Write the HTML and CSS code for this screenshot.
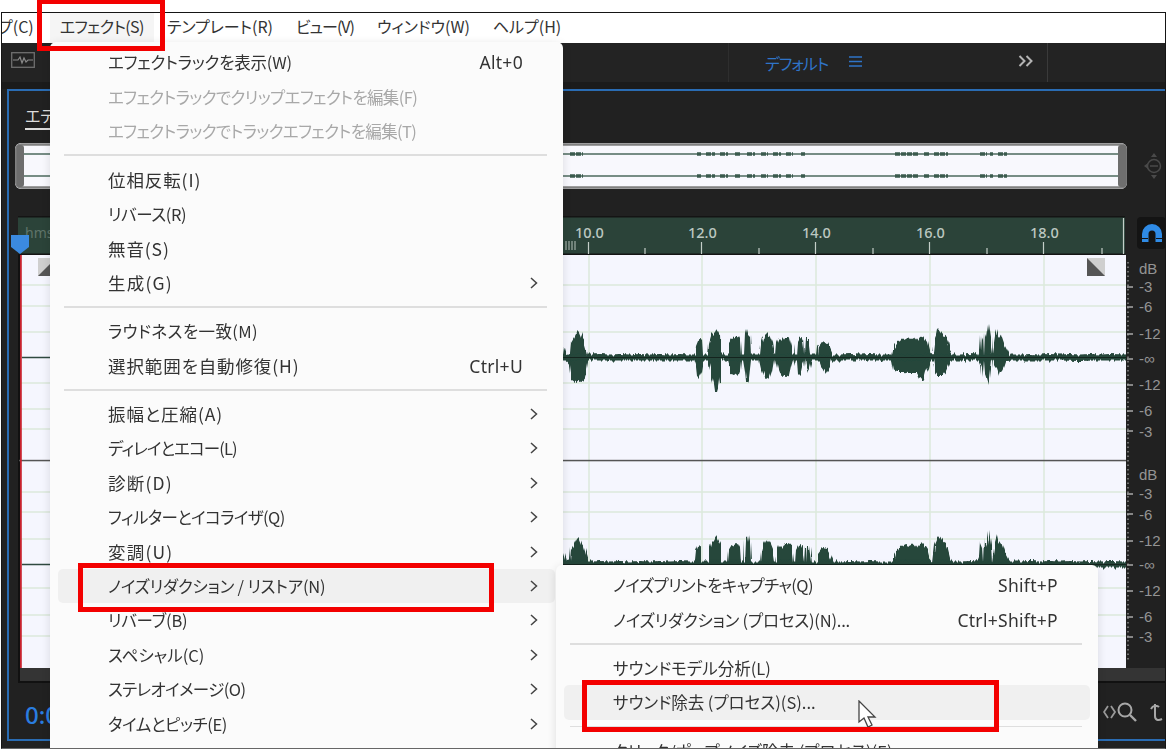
FILE: index.html
```html
<!DOCTYPE html>
<html lang="ja">
<head>
    <meta charset="UTF-8">
    <title>エフェクトメニュー</title>
    <link rel="stylesheet" href="styles.css">
</head>
<body>

<div class="app">
    <div class="menubar">
        <span class="menubar-item first">プ(C)</span>
        <span class="menubar-item active">エフェクト(S)</span>
        <span class="menubar-item">テンプレート(R)</span>
        <span class="menubar-item view">ビュー(V)</span>
        <span class="menubar-item">ウィンドウ(W)</span>
        <span class="menubar-item">ヘルプ(H)</span>
    </div>

    <div class="toolbar">
        <div class="toolbar-left">
            <svg class="wave-icon" viewBox="0 0 24 16"><rect x="0.7" y="0.7" width="22.6" height="14.6" fill="none" stroke="#6f6f6f" stroke-width="1.3"/><path d="M2 8h5l2-3 2 6 2-5 2 4 2-2h5" fill="none" stroke="#8a8a8a" stroke-width="1.2"/></svg>
        </div>
        <div class="toolbar-mid">
            <span class="workspace">デフォルト</span>
            <svg class="hamburger" viewBox="0 0 13 11"><path d="M0 1h13M0 5.500h13M0 10h13" stroke="#2f74c8" stroke-width="1.5"/></svg>
            <svg class="more" viewBox="0 0 16 12"><path d="M1.500 1l5 5-5 5M8.500 1l5 5-5 5" fill="none" stroke="#b4b4b4" stroke-width="2"/></svg>
        </div>
    </div>

    <div class="panel">
        <div class="tabs"><span class="tab">エディター</span></div>

        <div class="overview-row">
            <div class="overview">
                <svg viewBox="15 143 1113 46" width="1113" height="46">
                    <rect x="15" y="143" width="1113" height="46" fill="#f8f8fd"/>
                    <path d="M24 154h1094M24 176h1094" stroke="#4c6a5d" stroke-width="1.300"/>
                    <path class="blobs" d="M570 154h13M697 154h4M706 154h9M720 154h8M735 154h5M747 154h8M761 154h7M773 154h8M786 154h7M801 154h4M895 154h24M924 154h6M934 154h14M980 154h7M990 154h3M998 154h9"/>
                    <path class="blobs" d="M570 176h13M697 176h4M706 176h9M720 176h8M735 176h5M747 176h8M761 176h7M773 176h8M786 176h7M801 176h4M895 176h24M924 176h6M934 176h14M980 176h7M990 176h3M998 176h9"/>
                    <rect x="16" y="144.500" width="1111" height="43" rx="5" fill="none" stroke="#808080" stroke-width="2.500"/>
                    <rect x="16.500" y="145" width="7.500" height="42" rx="3" fill="#6e6e6e"/>
                    <rect x="1118" y="145" width="8.500" height="42" rx="3" fill="#6e6e6e"/>
                </svg>
            </div>
            <svg class="zoom-knob" viewBox="0 0 22 28"><path d="M11 1l3 4H8zM11 27l3-4H8zM1 14l4-3v6z" fill="#4a4a4a"/><circle cx="11" cy="14" r="6.500" fill="none" stroke="#4a4a4a" stroke-width="1.500"/><path d="M7 14h8" stroke="#4a4a4a" stroke-width="1.500"/></svg>
        </div>

        <div class="editor">
            <div class="editor-main">
                <svg class="ruler" viewBox="18 216 1107 39" width="1107" height="39">
                    <rect x="18" y="216" width="1107" height="39" fill="#2b4339"/>
                    <rect x="18" y="216" width="1107" height="1.500" fill="#141414"/>
                    <rect x="18" y="253.500" width="1107" height="1.500" fill="#141414"/>
                    <text class="ruler-faint" x="25" y="238">hms</text>
                    <path d="M566 241v9M569 241v9M572 241v9M575 241v9" stroke="#b8c4bd" stroke-width="1"/>
                    <path d="M588.500 242v12M701.500 242v12M815.500 242v12M929.500 242v12M1043.500 242v12M1123.500 218v36" stroke="#c4cec8" stroke-width="1.200"/>
                    <path d="M645 248v6M759 248v6M873 248v6M987 248v6M1102 248v6" stroke="#c4cec8" stroke-width="1.200"/>
                    <text class="ruler-label" x="575" y="238">10.0</text>
                    <text class="ruler-label" x="688" y="238">12.0</text>
                    <text class="ruler-label" x="802" y="238">14.0</text>
                    <text class="ruler-label" x="916" y="238">16.0</text>
                    <text class="ruler-label" x="1030" y="238">18.0</text>
                </svg>
                <svg class="track" viewBox="18 255 1108 413" width="1108" height="413">
                    <defs>
                        <filter id="rough" filterUnits="userSpaceOnUse" x="18" y="255" width="1108" height="413">
                            <feTurbulence type="fractalNoise" baseFrequency="0.55 0.01" numOctaves="2" seed="4"/>
                            <feDisplacementMap in="SourceGraphic" scale="6" xChannelSelector="A" yChannelSelector="G"/>
                        </filter>
                        <path id="wave" d="M563 355L564 347 566 354 570 353 571 342 574 337 576 333 578 331 580 333 582 338 584 341 586 348 588 355 592 355 600 354 610 355 620 354 630 355 640 354 650 355 660 354 670 355 680 354 690 355 695 355 696 345 698 340 701 339 702 355 708 355 709 343 711 336 714 333 716 329 718 332 720 336 721 355 728 355 729 344 732 339 736 337 738 336 740 340 741 355 744 355 745 333 746 329 748 328 749 334 751 336 752 355 760 355 761 345 763 338 765 334 767 332 770 337 772 342 774 355 776 355 777 343 779 338 782 341 785 337 788 337 790 338 792 346 793 355 796 355 797 342 799 338 801 337 803 341 805 355 806 339 809 339 811 355 817 355 818 346 821 342 824 341 827 342 830 348 833 355 840 355 850 354 860 355 870 354 880 355 892 355 894 347 897 342 902 340 906 338 910 339 914 337 917 341 920 337 923 336 925 339 927 342 929 350 933 355 935 338 937 333 938 328 940 331 942 334 946 337 948 342 950 350 953 355 960 355 970 354 978 355 980 350 981 335 983 340 984 355 985 332 987 338 989 324 991 338 992 355 995 335 997 328 999 337 1001 334 1004 343 1007 349 1010 355 1020 355 1030 354 1040 355 1050 354 1060 355 1070 354 1080 355 1090 354 1100 355 1110 354 1126 355L1126 360 1110 360 1095 360 1080 361 1060 360 1040 360 1020 360 1012 360 1006 361 1004 367 1002 371 999 374 997 368 995 366 992 360 990 378 989 385 987 378 985 372 984 360 982 376 981 365 979 360 960 360 952 360 949 364 946 371 942 376 938 376 935 372 933 360 930 360 928 368 926 372 924 380 921 378 919 379 916 373 912 373 908 373 904 372 898 372 894 370 892 360 880 360 860 360 840 360 831 360 829 368 826 373 824 370 821 366 819 360 812 360 810 368 808 372 806 367 805 360 802 367 800 376 797 373 796 360 794 360 792 367 790 376 787 377 784 376 780 374 778 369 776 360 774 360 772 372 770 378 767 379 764 377 761 369 759 360 752 360 750 378 748 382 746 382 745 372 743 360 741 360 740 369 738 374 735 375 731 374 729 367 727 360 722 360 720 378 719 385 717 392 715 392 714 385 712 378 710 368 708 360 703 360 701 373 699 377 697 375 696 366 694 360 680 360 660 360 640 360 620 360 600 360 590 360 588 362 586 374 584 380 581 382 578 381 575 382 572 380 570 365 566 360 563 360Z"/>
                    </defs>
                    <rect x="18" y="255" width="2" height="413" fill="#111"/>
                    <rect x="20" y="255" width="1106" height="413" fill="#f5f6fe"/>
                    <path d="M20 285h1106M20 306h1106M20 332h1106M20 383h1106M20 409h1106M20 429h1106M20 492h1106M20 512h1106M20 539h1106M20 588h1106M20 615h1106M20 636h1106" stroke="#dce9dc" stroke-width="1.500"/>
                    <path d="M589 255v413M702 255v413M816 255v413M930 255v413M1044 255v413M475 255v413M361 255v413M247 255v413M133 255v413" stroke="#dce9dc" stroke-width="1.500"/>
                    <rect x="19" y="459.800" width="1107" height="1.500" fill="#555"/>
                    <g filter="url(#rough)">
                        <use href="#wave" fill="#25463b"/>
                        <use href="#wave" transform="translate(0 207)" fill="#25463b"/>
                        <path d="M563 357.500h563M563 564.500h563" stroke="#25463b" stroke-width="6"/>
                    </g>
                    <path d="M22 357.500h540M22 564.500h540" stroke="#2f4a40" stroke-width="1.500"/>
                    <path d="M563 357.500h563M563 564.500h563" stroke="#14241e" stroke-width="1"/>
                    <rect x="38" y="258" width="18" height="18" fill="#cfcfcf"/>
                    <path d="M38 276l18-18v18z" fill="#555"/>
                    <rect x="1087" y="258" width="18" height="18" fill="#cfcfcf"/>
                    <path d="M1087 258l18 18h-18z" fill="#555"/>
                    <rect x="20" y="255" width="1.800" height="413" fill="#c8222e"/>
                </svg>
                <div class="track-end"></div>
                <svg class="playhead" viewBox="0 0 18 19"><path d="M0 0h18v12l-9 7-9-7z" fill="#3b8ae0"/></svg>
            </div>
            <div class="editor-side">
                <div class="magnet">
                    <svg viewBox="0 0 20 18" width="20" height="18"><path d="M0 18V10a10 10 0 0 1 20 0v8h-6.500v-8a3.500 3.500 0 0 0-7 0v8z" fill="#2f8be6"/><path d="M0 14.500h6M14 14.500h6" stroke="#141414" stroke-width="1"/></svg>
                </div>
                <svg class="scale" viewBox="1126 255 40 413" width="40" height="413">
                    <path d="M1128 262v400" stroke="#8a8a8a" stroke-width="1.500" stroke-dasharray="1.500 3"/>
                    <path d="M1127 287h6M1127 307h6M1127 334h6M1127 359h6M1127 385h6M1127 411h6M1127 431h6M1127 494h6M1127 514h6M1127 541h6M1127 565h6M1127 591h6M1127 617h6M1127 637h6" stroke="#a8a8a8" stroke-width="1.500"/>
                    <text x="1139" y="274">dB</text>
                    <text x="1139" y="292">-3</text>
                    <text x="1139" y="312">-6</text>
                    <text x="1139" y="339">-12</text>
                    <text x="1139" y="364">-∞</text>
                    <text x="1139" y="390">-12</text>
                    <text x="1139" y="416">-6</text>
                    <text x="1139" y="437">-3</text>
                    <text x="1139" y="480">dB</text>
                    <text x="1139" y="499">-3</text>
                    <text x="1139" y="520">-6</text>
                    <text x="1139" y="546">-12</text>
                    <text x="1139" y="570">-∞</text>
                    <text x="1139" y="596">-12</text>
                    <text x="1139" y="622">-6</text>
                    <text x="1139" y="642">-3</text>
                </svg>
                <div class="track-end"></div>
            </div>
        </div>

        <div class="transport">
            <span class="timecode">0:0</span>
            <svg class="zoom-tools" viewBox="0 0 62 24"><path d="M5 6l-4 6 4 6M8 6l4 6-4 6" fill="none" stroke="#9a9a9a" stroke-width="1.800"/><circle cx="22" cy="10" r="6.500" fill="none" stroke="#a8a8a8" stroke-width="2"/><path d="M27 15l6 6" stroke="#a8a8a8" stroke-width="2.400"/><path d="M52 4v12c0 4 3 5 7 3M48 9c2-4 6-4 8-2" fill="none" stroke="#a8a8a8" stroke-width="2"/></svg>
        </div>
    </div>

    <!-- メニュー -->
    <div class="menu main-menu">
        <div class="item ls-2"><span>エフェクトラックを表示(W)</span><span class="key">Alt+0</span></div>
        <div class="item off ls-6"><span>エフェクトラックでクリップエフェクトを編集(F)</span></div>
        <div class="item off ls-6"><span>エフェクトラックでトラックエフェクトを編集(T)</span></div>
        <div class="sep"></div>
        <div class="item big"><span>位相反転(I)</span></div>
        <div class="item ls-4"><span>リバース(R)</span></div>
        <div class="item big"><span>無音(S)</span></div>
        <div class="item bigger"><span>生成(G)</span><svg class="arrow" viewBox="0 0 8 12"><path d="M1 1l5.500 5-5.500 5" /></svg></div>
        <div class="sep"></div>
        <div class="item ls-up"><span>ラウドネスを一致(M)</span></div>
        <div class="item big"><span>選択範囲を自動修復(H)</span><span class="key">Ctrl+U</span></div>
        <div class="sep"></div>
        <div class="item big"><span>振幅と圧縮(A)</span><svg class="arrow" viewBox="0 0 8 12"><path d="M1 1l5.500 5-5.500 5" /></svg></div>
        <div class="item ls-9"><span>ディレイとエコー(L)</span><svg class="arrow" viewBox="0 0 8 12"><path d="M1 1l5.500 5-5.500 5" /></svg></div>
        <div class="item bigger"><span>診断(D)</span><svg class="arrow" viewBox="0 0 8 12"><path d="M1 1l5.500 5-5.500 5" /></svg></div>
        <div class="item ls-6"><span>フィルターとイコライザ(Q)</span><svg class="arrow" viewBox="0 0 8 12"><path d="M1 1l5.500 5-5.500 5" /></svg></div>
        <div class="item bigger"><span>変調(U)</span><svg class="arrow" viewBox="0 0 8 12"><path d="M1 1l5.500 5-5.500 5" /></svg></div>
        <div class="item hover ls-2"><span>ノイズリダクション / リストア(N)</span><svg class="arrow" viewBox="0 0 8 12"><path d="M1 1l5.500 5-5.500 5" /></svg></div>
        <div class="item ls-2"><span>リバーブ(B)</span><svg class="arrow" viewBox="0 0 8 12"><path d="M1 1l5.500 5-5.500 5" /></svg></div>
        <div class="item"><span>スペシャル(C)</span><svg class="arrow" viewBox="0 0 8 12"><path d="M1 1l5.500 5-5.500 5" /></svg></div>
        <div class="item ls-6"><span>ステレオイメージ(O)</span><svg class="arrow" viewBox="0 0 8 12"><path d="M1 1l5.500 5-5.500 5" /></svg></div>
        <div class="item ls-4"><span>タイムとピッチ(E)</span><svg class="arrow" viewBox="0 0 8 12"><path d="M1 1l5.500 5-5.500 5" /></svg></div>
    </div>

    <div class="menu sub-menu">
        <div class="item ls-6"><span>ノイズプリントをキャプチャ(Q)</span><span class="key">Shift+P</span></div>
        <div class="item ls-2"><span>ノイズリダクション (プロセス)(N)...</span><span class="key">Ctrl+Shift+P</span></div>
        <div class="sep"></div>
        <div class="item"><span>サウンドモデル分析(L)</span></div>
        <div class="item hover"><span>サウンド除去 (プロセス)(S)...</span></div>
        <div class="sep"></div>
        <div class="item"><span>クリック/ポップノイズ除去 (プロセス)(E)</span></div>
    </div>

    <svg class="cursor" viewBox="0 0 20 28"><path d="M1 1v21l5-4 4 9 4-2-4-8h7z" fill="#fff" stroke="#444" stroke-width="1.300"/></svg>
</div>

<!-- 赤枠 -->
<div class="mark mark-menubar"></div>
<div class="mark mark-noise"></div>
<div class="mark mark-remove"></div>

</body>
</html>
```

FILE: styles.css
```css
html, body {
    margin: 0;
    height: 751px;
    overflow: hidden;
    background-color: #fff;
}
body {
    position: relative;
    font-family: "Noto Sans CJK JP", "Noto Sans", sans-serif;
    color: #333;
}
svg {
    display: block;
}
.app {
    position: absolute;
    left: 1px;
    top: 12px;
    width: 1165px;
    height: 737px;
    box-sizing: border-box;
    border: 1px solid #151515;
    border-bottom-color: #666;
    background-color: #222;
    overflow: hidden;
    filter: blur(0.35px);
}

/* メニューバー */
.menubar {
    display: flex;
    gap: 23px;
    height: 30px;
    box-sizing: border-box;
    padding-bottom: 4px;
    align-items: center;
    background-color: #fff;
    font-size: 16px;
    font-feature-settings: "palt";
    white-space: nowrap;
}
.menubar-item.first {
    margin-left: -4px;
}
.menubar-item.active {
    background-color: #f5f5f5;
    margin: 0 -10px 0 -7px;
    padding: 0 10px;
    line-height: 26px;
    letter-spacing: -0.6px;
    align-self: flex-start;
    height: 30px;
    box-sizing: border-box;
}
.menubar-item.view {
    letter-spacing: -1px;
}

/* ツールバー */
.toolbar {
    display: flex;
    height: 39px;
    border-bottom: 7px solid #1b1b1b;
    background-color: #232323;
}
.toolbar-left {
    width: 726px;
    padding: 9px 0 0 9px;
    box-sizing: border-box;
}
.wave-icon {
    width: 24px;
    height: 16px;
}
.toolbar-mid {
    position: relative;
    display: flex;
    align-items: center;
    width: 320px;
    border-left: 1px solid #2e2e2e;
    border-right: 1px solid #3a3a3a;
    padding-left: 36px;
    box-sizing: border-box;
}
.workspace {
    width: 84px;
    color: #2f74c8;
    font-size: 16px;
    letter-spacing: -1px;
    font-feature-settings: "palt";
}
.hamburger {
    width: 13px;
    height: 11px;
    margin-bottom: 3px;
}
.more {
    width: 16px;
    height: 12px;
    margin: 0 0 3px 156px;
}

/* パネル */
.panel {
    margin-left: 5px;
    height: 652px;
    box-sizing: border-box;
    border: 2px solid #2a6cb3;
    border-right: none;
    background-color: #212121;
}
.tabs {
    height: 38px;
    padding: 12px 0 0 16px;
    box-sizing: border-box;
}
.tab {
    display: inline-block;
    height: 24px;
    border-bottom: 2px solid #ddd;
    color: #ddd;
    font-size: 16px;
    line-height: 22px;
    font-feature-settings: "palt";
}
.overview-row {
    display: flex;
    align-items: center;
    margin: 14px 0 0 6px;
}
.overview {
    width: 1113px;
    height: 46px;
    border-radius: 6px;
    overflow: hidden;
}
.blobs {
    stroke: #3a5a4d;
    stroke-width: 3.500;
    stroke-dasharray: 5 1;
}
.zoom-knob {
    width: 22px;
    height: 28px;
    margin-left: 16px;
}
.editor {
    display: flex;
    margin-top: 27px;
}
.editor-main {
    position: relative;
    width: 1108px;
    margin-left: 9px;
}
.ruler-label {
    font-family: "Noto Sans", sans-serif;
    font-size: 14.500px;
    font-weight: 500;
    fill: #bcc8c1;
}
.ruler-faint {
    font-family: "Noto Sans", sans-serif;
    font-size: 14px;
    fill: #5f7469;
}
.track-end {
    height: 13px;
    background-color: #343434;
    border-left: 2px solid #111;
    border-bottom: 2px solid #111;
}
.editor-side .track-end {
    border-left: none;
}
.playhead {
    position: absolute;
    left: -7px;
    top: 19px;
    width: 18px;
    height: 19px;
}
.editor-side {
    width: 40px;
}
.magnet {
    display: flex;
    align-items: center;
    justify-content: center;
    width: 29px;
    height: 32px;
    margin: 1px 0 6px 11px;
    border-radius: 4px;
    background-color: #141414;
}
.scale text {
    font-family: "Liberation Sans", sans-serif;
    font-size: 15px;
    fill: #949494;
}
.transport {
    display: flex;
    justify-content: space-between;
    align-items: center;
    height: 42px;
    padding: 16px 0 0 16px;
    box-sizing: border-box;
}
.timecode {
    margin-top: 4px;
    color: #2a7de0;
    font-family: "Noto Sans", sans-serif;
    font-size: 24px;
    font-weight: 500;
}
.zoom-tools {
    width: 62px;
    height: 24px;
}

/* メニュー */
.menu {
    position: absolute;
    box-sizing: border-box;
    background-color: #fbfbfb;
    border-radius: 6px;
    box-shadow: 0 2px 10px rgba(0, 0, 0, 0.12);
    font-size: 16.500px;
    font-feature-settings: "palt";
    white-space: nowrap;
}
.main-menu {
    left: 48px;
    top: 29px;
    width: 513px;
    height: 760px;
    padding: 3px 8px;
}
.sub-menu {
    left: 554px;
    top: 552px;
    width: 542px;
    height: 240px;
    padding: 3px 8px;
}
.item {
    display: flex;
    align-items: center;
    justify-content: space-between;
    height: 34.400px;
    padding: 0 17px 0 50px;
    border-radius: 5px;
}
.sub-menu .item {
    padding-left: 49px;
}
.item.off {
    color: #a8a8a8;
}
.item.hover {
    background-color: #f0f0f0;
}
/* かな/漢字で字幅が違うので行ごとに調整 */
.big {
    font-size: 17.500px;
    letter-spacing: 0.9px;
}
.bigger {
    font-size: 17.500px;
    letter-spacing: 1.200px;
}
.ls-up {
    letter-spacing: 0.4px;
}
.ls-2 {
    letter-spacing: -0.2px;
}
.ls-4 {
    letter-spacing: -0.4px;
}
.ls-6 {
    letter-spacing: -0.6px;
}
.ls-9 {
    letter-spacing: -0.9px;
}
.key {
    margin-right: 15px;
    font-family: "Noto Sans", sans-serif;
    font-size: 17.500px;
    letter-spacing: 0.3px;
}
.sub-menu .key {
    margin-right: 15px;
}
.arrow {
    width: 8px;
    height: 12px;
    fill: none;
    stroke: #444;
    stroke-width: 1.500;
}
.sep {
    height: 1.500px;
    margin: 6.300px 8px 6.300px 6px;
    background-color: #dedede;
}
.cursor {
    position: absolute;
    left: 856px;
    top: 687px;
    width: 20px;
    height: 28px;
}

/* 赤枠 */
.mark {
    position: absolute;
    box-sizing: border-box;
    border: 5px solid #f30000;
}
.mark-menubar {
    left: 37px;
    top: -1px;
    width: 128px;
    height: 52px;
}
.mark-noise {
    left: 78px;
    top: 563px;
    width: 416px;
    height: 49px;
}
.mark-remove {
    left: 582px;
    top: 680px;
    width: 417px;
    height: 52px;
}
```
